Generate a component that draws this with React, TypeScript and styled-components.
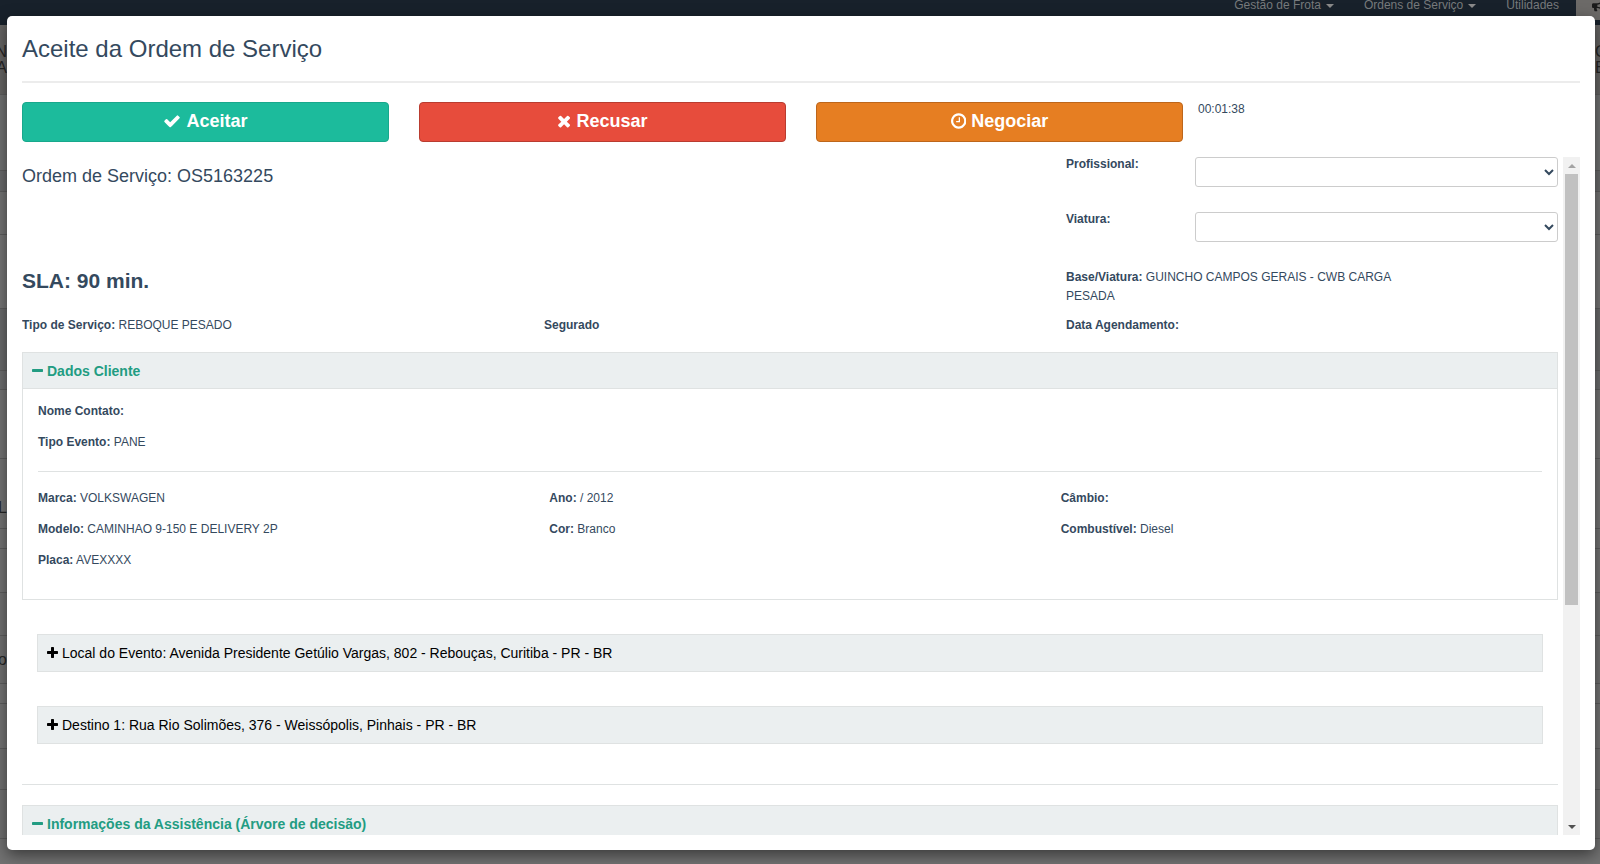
import React, { useState } from 'react';
import styled, { createGlobalStyle } from 'styled-components';
import { FaBullhorn } from 'react-icons/fa';

const Global = createGlobalStyle`
  *, *::before, *::after { box-sizing: border-box; }
  body { margin: 0; font: 12px/18px "Liberation Sans", Arial, sans-serif; color: #34495e; background: #727272; }
  button, select { font: inherit; }
`;

const line = '#dfe2e2';

const Page = styled.div`position: relative; height: 100vh; overflow: hidden;`;
const Backdrop = styled.div`position: absolute; inset: 0; display: flex; flex-direction: column;`;
const NavBar = styled.nav`
  flex: none; height: 25px; background: #18212b; display: flex; justify-content: flex-end;
  line-height: 10px; font-size: 12px;
`;
const NavLink = styled.a`
  display: flex; align-items: center; gap: 5px; height: 10px; margin-right: 30px;
  color: #777a7c; text-decoration: none;
`;
const Caret = styled.span`margin-top: 2px; border: 4px solid transparent; border-top-color: #8a8a8a; border-bottom: 0;`;
const NavTail = styled.div`
  width: 24px; height: 20px; margin-left: -13px; padding-left: 16px; overflow: hidden;
  background: #6c6a68; color: #1b1b1b;
`;
const Strip = styled.div<{ $h: number; $tone: string; $low?: boolean }>`
  flex: none; height: ${p => p.$h}px; background: ${p => p.$tone}; border-bottom: 1px solid #5e5e5e;
  padding-top: ${p => p.$low ? 29 : 0}px;
  display: flex; justify-content: space-between; align-items: center; overflow: hidden;
  color: #262626; font-size: 16px; line-height: 16px; white-space: nowrap;
`;
const EdgeText = styled.div<{ $end?: boolean }>`
  width: ${p => p.$end ? 5 : 7}px; overflow: hidden;
  display: flex; flex-direction: column; align-items: ${p => p.$end ? 'flex-start' : 'flex-end'};
`;

const Dialog = styled.section`
  position: absolute; inset: 16px 5px 14px 7px; padding: 0 15px 15px;
  display: flex; flex-direction: column;
  background: #fff; border-radius: 5px; box-shadow: 0 5px 15px rgba(0, 0, 0, .5);
`;
const Title = styled.h1`
  flex: none; margin: 0 0 19px; padding: 21px 0 20px; border-bottom: 2px solid #ececec;
  font-size: 24px; line-height: 24px; font-weight: 400;
`;
const Actions = styled.div`
  flex: none; display: grid; grid-template-columns: repeat(4, 1fr); column-gap: 30px;
  margin: 0 -15px 15px 0; padding-right: 15px; align-items: start;
`;
const Action = styled.button<{ $bg: string; $edge: string }>`
  height: 40px; padding: 0 0 2px; border: 1px solid ${p => p.$edge}; border-radius: 4px;
  background: ${p => p.$bg}; color: #fff; font-size: 18px; font-weight: 700; line-height: 24px;
  display: flex; align-items: center; justify-content: center; gap: 5px;
`;
const Timer = styled.time`margin-left: -15px; line-height: 14px;`;

const Viewport = styled.div`flex: 1; min-height: 0; display: flex; gap: 5px;`;
const Scroller = styled.div`flex: 1; min-width: 0; overflow-y: auto; scrollbar-width: none;`;
const ScrollTrack = styled.div`flex: none; width: 17px; background: #f1f1f1; display: flex; flex-direction: column;`;
const Arrow = styled.span<{ $down?: boolean }>`
  flex: none; height: 17px; display: flex; align-items: center; justify-content: center;
  &::before {
    content: ''; border: 4px solid transparent;
    ${p => p.$down ? 'border-top-color: #505050; border-bottom: 0;' : 'border-bottom-color: #a3a3a3; border-top: 0;'}
  }
`;
const ThumbLane = styled.div`flex: 1; padding: 0 2px;`;
const Thumb = styled.div`height: 67%; background: #c1c1c1;`;

const Summary = styled.div`
  display: grid; grid-template-columns: repeat(3, 1fr); column-gap: 30px; padding-bottom: 5px;
`;
const Wide = styled.div`grid-column: span 2;`;
const OrderNumber = styled.h2`margin: 9px 0 0; font-size: 18px; line-height: 20px; font-weight: 400;`;
const Sla = styled.h2`margin: 0; padding-top: 2px; font-size: 21px; line-height: 24px; font-weight: 700;`;
const Choice = styled.div`display: flex; margin-bottom: 25px;`;
const ChoiceLabel = styled.label`flex: 0 0 129px; font-weight: 700; line-height: 14px;`;
const Select = styled.select`
  flex: 1; min-width: 0; height: 30px; border: 1px solid #ccc; border-radius: 3px; background: #fff; color: #34495e;
`;
const Text = styled.p`margin: 0 0 12px; line-height: 19px;`;
const BaseText = styled(Text)`max-width: 350px; margin: 1px 0 10px;`;

const Panel = styled.section`border: 1px solid ${line};`;
const PanelToggle = styled.button`
  width: 100%; height: 36px; padding: 0 9px; border: 0; border-bottom: 1px solid ${line};
  background: #ebeff0; color: #229c82; font-size: 14px; font-weight: 700; text-align: left;
  display: flex; align-items: center; gap: 4px;
`;
const PanelBody = styled.div`padding: 13px 15px 17px;`;
const Rule = styled.hr`margin: 0; border: 0; border-top: 1px solid ${line};`;
const Fields = styled.div`
  display: grid; grid-template-columns: repeat(3, 1fr); column-gap: 30px;
  margin-top: 19px; padding-top: 17px; border-top: 1px solid ${line};
`;
const PlaceToggle = styled.button`
  display: flex; align-items: center; gap: 4px; width: calc(100% - 30px); height: 38px;
  margin: 34px 15px 0; padding: 0 9px; border: 1px solid ${line}; background: #ebeff0;
  color: #000; font-size: 14px; text-align: left;
`;
const SectionRule = styled(Rule)`margin: 40px 0 20px;`;

const icons = {
  check: { x: 0, w: 1792, d: 'M1671 566q0 40-28 68l-724 724-136 136q-28 28-68 28t-68-28l-136-136-362-362q-28-28-28-68t28-68l136-136q28-28 68-28t68 28l294 295 656-657q28-28 68-28t68 28l136 136q28 28 28 68z' },
  times: { x: 192, w: 1408, d: 'M1490 1322q0 40-28 68l-136 136q-28 28-68 28t-68-28l-294-294-294 294q-28 28-68 28t-68-28l-136-136q-28-28-28-68t28-68l294-294-294-294q-28-28-28-68t28-68l136-136q28-28 68-28t68 28l294 294 294-294q28-28 68-28t68 28l136 136q28 28 28 68t-28 68l-294 294 294 294q28 28 28 68z' },
  clock: { x: 128, w: 1536, d: 'M1024 544v448q0 14-9 23t-23 9h-320q-14 0-23-9t-9-23v-64q0-14 9-23t23-9h224v-352q0-14 9-23t23-9h64q14 0 23 9t9 23zm416 352q0-148-73-273t-198-198-273-73-273 73-198 198-73 273 73 273 198 198 273 73 273-73 198-198 73-273zm224 0q0 209-103 385.5t-279.5 279.5-385.5 103-385.5-103-279.5-279.5-103-385.5 103-385.5 279.5-279.5 385.5-103 385.5 103 279.5 279.5 103 385.5z' },
  minus: { x: 192, w: 1408, d: 'M1600 736v192q0 40-28 68t-68 28h-1216q-40 0-68-28t-28-68v-192q0-40 28-68t68-28h1216q40 0 68 28t28 68z' },
  plus: { x: 192, w: 1408, d: 'M1600 736v192q0 40-28 68t-68 28h-416v416q0 40-28 68t-68 28h-192q-40 0-68-28t-28-68v-416h-416q-40 0-68-28t-28-68v-192q0-40 28-68t68-28h416v-416q0-40 28-68t68-28h192q40 0 68 28t28 68v416h416q40 0 68 28t28 68z' },
};
const Glyph = styled.svg`flex: none; height: 1em; fill: currentColor;`;
const Icon = ({ name }: { name: keyof typeof icons }) => {
  const { x, w, d } = icons[name];
  return <Glyph viewBox={`${x} 0 ${w} 1792`} aria-hidden="true"><path d={d} /></Glyph>;
};

const Field = ({ label, value }: { label: string; value?: string }) => (
  <Text><b>{label}</b> {value}</Text>
);

const strips: { h: number; tone: string; left?: string[]; right?: string[]; low?: boolean }[] = [
  { h: 70, tone: '#666564', left: ['N', 'RA'], right: ['C', 'E'] },
  { h: 76, tone: '#717272' },
  { h: 21, tone: '#6a6b6c' },
  { h: 43, tone: '#747474' },
  { h: 74, tone: '#767676' },
  { h: 62, tone: '#6a6b6c' },
  { h: 19, tone: '#6d6e6f' },
  { h: 69, tone: '#747474' },
  { h: 70, tone: '#747474', left: ['L'], low: true },
  { h: 20, tone: '#747474' },
  { h: 44, tone: '#747474' },
  { h: 43, tone: '#717171' },
  { h: 48, tone: '#717171', left: ['o'] },
  { h: 20, tone: '#747474' },
  { h: 45, tone: '#747474' },
  { h: 41, tone: '#717171' },
  { h: 49, tone: '#717171' },
];

export default function App() {
  const [open, setOpen] = useState(true);
  return (
    <Page>
      <Global />
      <Backdrop>
        <NavBar>
          <NavLink href="#frota">Gestão de Frota <Caret /></NavLink>
          <NavLink href="#ordens">Ordens de Serviço <Caret /></NavLink>
          <NavLink href="#utilidades">Utilidades</NavLink>
          <NavTail><FaBullhorn size={12} /></NavTail>
        </NavBar>
        {strips.map((s, i) => (
          <Strip key={i} $h={s.h} $tone={s.tone} $low={s.low}>
            <EdgeText>{s.left?.map(t => <span key={t}>{t}</span>)}</EdgeText>
            <EdgeText $end>{s.right?.map(t => <span key={t}>{t}</span>)}</EdgeText>
          </Strip>
        ))}
      </Backdrop>
      <Dialog role="dialog" aria-labelledby="title">
        <Title id="title">Aceite da Ordem de Serviço</Title>
        <Actions>
          <Action $bg="#1cbb9c" $edge="#18a88c"><Icon name="check" />Aceitar</Action>
          <Action $bg="#e74c3c" $edge="#b93c30"><Icon name="times" />Recusar</Action>
          <Action $bg="#e67e22" $edge="#bd661b"><Icon name="clock" />Negociar</Action>
          <Timer>00:01:38</Timer>
        </Actions>
        <Viewport>
          <Scroller>
            <Summary>
              <Wide><OrderNumber>Ordem de Serviço: OS5163225</OrderNumber></Wide>
              <div>
                <Choice><ChoiceLabel htmlFor="prof">Profissional:</ChoiceLabel><Select id="prof" /></Choice>
                <Choice><ChoiceLabel htmlFor="viatura">Viatura:</ChoiceLabel><Select id="viatura" /></Choice>
              </div>
              <Wide><Sla>SLA: 90 min.</Sla></Wide>
              <BaseText><b>Base/Viatura:</b> GUINCHO CAMPOS GERAIS - CWB CARGA PESADA</BaseText>
              <Field label="Tipo de Serviço:" value="REBOQUE PESADO" />
              <Field label="Segurado" />
              <Field label="Data Agendamento:" />
            </Summary>
            <Panel>
              <PanelToggle aria-expanded={open} onClick={() => setOpen(!open)}><Icon name="minus" />Dados Cliente</PanelToggle>
              {open && (
                <PanelBody>
                  <Field label="Nome Contato:" />
                  <Field label="Tipo Evento:" value="PANE" />
                  <Fields>
                    <Field label="Marca:" value="VOLKSWAGEN" />
                    <Field label="Ano:" value="/ 2012" />
                    <Field label="Câmbio:" />
                    <Field label="Modelo:" value="CAMINHAO 9-150 E DELIVERY 2P" />
                    <Field label="Cor:" value="Branco" />
                    <Field label="Combustível:" value="Diesel" />
                    <Field label="Placa:" value="AVEXXXX" />
                  </Fields>
                </PanelBody>
              )}
            </Panel>
            <PlaceToggle><Icon name="plus" />Local do Evento: Avenida Presidente Getúlio Vargas, 802 - Rebouças, Curitiba - PR - BR</PlaceToggle>
            <PlaceToggle><Icon name="plus" />Destino 1: Rua Rio Solimões, 376 - Weissópolis, Pinhais - PR - BR</PlaceToggle>
            <SectionRule />
            <Panel>
              <PanelToggle><Icon name="minus" />Informações da Assistência (Árvore de decisão)</PanelToggle>
            </Panel>
          </Scroller>
          <ScrollTrack><Arrow /><ThumbLane><Thumb /></ThumbLane><Arrow $down /></ScrollTrack>
        </Viewport>
      </Dialog>
    </Page>
  );
}
